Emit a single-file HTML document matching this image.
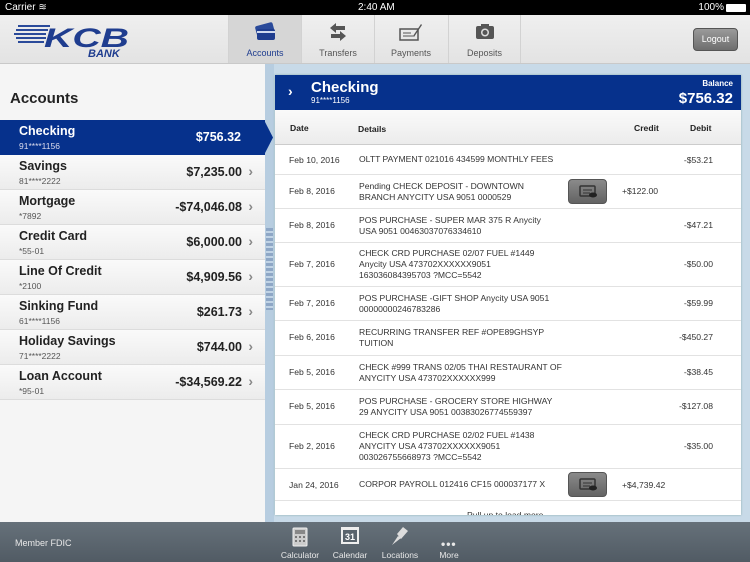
<!DOCTYPE html>
<html><head><meta charset="utf-8"><style>
*{margin:0;padding:0;box-sizing:border-box}
body{width:750px;height:562px;overflow:hidden;font-family:"Liberation Sans",Arial,sans-serif;background:#c8dae8;position:relative}
.a{position:absolute}
.status{left:0;top:0;width:750px;height:15px;background:#000;color:#fff;font-size:10px;line-height:15px}
.nav{left:0;top:15px;width:750px;height:49px;background:linear-gradient(#efefef,#e3e3e3);border-bottom:1px solid #c9c9c9}
.tab{top:0;height:48px;width:73px;border-left:1px solid #d2d2d2;text-align:center;font-size:9px;color:#555}
.tab .l{position:absolute;left:0;right:0;top:33px}
.left{left:0;top:64px;width:265px;height:458px;background:#f5f5f5}
.row{left:0;width:265px;height:35px;background:linear-gradient(#fafafa,#ececec);border-bottom:1px solid #dcdcdc}
.row .n{position:absolute;left:19px;top:4px;font-size:12.5px;font-weight:bold;color:#222}
.row .s{position:absolute;left:19px;top:21px;font-size:8.5px;color:#555}
.row .v{position:absolute;right:23px;top:10px;font-size:12.5px;font-weight:bold;color:#222}
.row .c{position:absolute;right:12px;top:8px;font-size:14px;color:#888;font-weight:bold}
.card{left:275px;top:75px;width:466px;height:440px;background:#fff;overflow:hidden;box-shadow:0 0 2px #8aa}
.tr{left:0;width:466px;border-bottom:1px solid #e2e2e2;font-size:8.6px;color:#333}
.tr .d{position:absolute;left:14px}
.tr .t{position:absolute;left:84px;line-height:11px}
.tr .cr{position:absolute;left:347px}
.tr .db{position:absolute;right:28px}
.btn{position:absolute;left:293px;width:39px;height:25px;border-radius:4px;background:linear-gradient(#8a8a8a,#636363);border:1px solid #555}
.bottom{left:0;top:522px;width:750px;height:40px;background:linear-gradient(#66717a,#515b64);color:#e8e8e8;font-size:8.5px}
.bi{top:28px;text-align:center;width:50px}
</style></head><body>
<div class="a status"><span style="position:absolute;left:5px">Carrier ≋</span><span style="position:absolute;left:358px">2:40 AM</span><span style="position:absolute;right:26px">100%</span><span style="position:absolute;right:4px;top:4px;width:20px;height:8px;background:#fff;border-radius:1px"></span></div>
<div class="a nav">
 <svg class="a" style="left:0;top:0" width="140" height="48" viewBox="0 0 140 48">
  <g fill="#2a4a9a"><rect x="18" y="10" width="32" height="2"/><rect x="16" y="14" width="32" height="2"/><rect x="14" y="18" width="32" height="2"/><rect x="16" y="22" width="30" height="2"/><rect x="18" y="26" width="26" height="2"/></g>
  <text x="44" y="32" font-family="Liberation Sans" font-weight="bold" font-style="italic" font-size="27" fill="#1f3d8f" textLength="85" lengthAdjust="spacingAndGlyphs">KCB</text>
  <text x="88" y="42" font-family="Liberation Sans" font-weight="bold" font-style="italic" font-size="11" fill="#1f3d8f">BANK</text>
 </svg>
 <div class="a tab" style="left:228px;background:#d6d6d6;color:#1f3d8f"><svg style="margin-top:7px" width="24" height="20" viewBox="0 0 24 20"><rect x="3" y="2" width="18" height="12" rx="2" fill="#2a4a9a" transform="rotate(-15 12 8)"/><rect x="4" y="7" width="18" height="11" rx="2" fill="#1f3d8f"/><rect x="4" y="9" width="18" height="2" fill="#cfd8ee"/></svg><div class="l">Accounts</div></div>
 <div class="a tab" style="left:301px"><svg style="margin-top:8px" width="20" height="18" viewBox="0 0 20 18"><path d="M2 5 L8 0 V3 H17 V7 H8 V10Z M18 13 L12 8 V11 H3 V15 H12 V18Z" fill="#555"/></svg><div class="l">Transfers</div></div>
 <div class="a tab" style="left:374px"><svg style="margin-top:7px" width="24" height="20" viewBox="0 0 24 20"><rect x="1" y="7" width="18" height="11" fill="none" stroke="#555" stroke-width="1.5"/><path d="M4 11h8M4 14h10" stroke="#555"/><path d="M14 14 L22 2 L23 3 L15 15Z" fill="#555"/></svg><div class="l">Payments</div></div>
 <div class="a tab" style="left:448px;border-right:1px solid #d2d2d2"><svg style="margin-top:8px" width="20" height="17" viewBox="0 0 20 17"><rect x="1" y="3" width="18" height="13" rx="2" fill="#555"/><rect x="6" y="1" width="8" height="3" fill="#555"/><circle cx="10" cy="9.5" r="4" fill="#ddd"/><circle cx="10" cy="9.5" r="2.5" fill="#555"/></svg><div class="l">Deposits</div></div>
 <div class="a" style="left:693px;top:13px;width:45px;height:23px;border-radius:4px;background:linear-gradient(#9a9a9a,#6e6e6e);border:1px solid #555;color:#fff;font-size:9px;text-align:center;line-height:21px">Logout</div>
</div>
<div class="a left">
 <div class="a" style="left:10px;top:26px;font-size:15px;font-weight:bold;color:#222">Accounts</div>
</div>
<div class="a" style="left:265px;top:64px;width:9px;height:458px;background:#b7cde0"></div>
<div class="a" style="left:266px;top:228px;width:7px;height:82px;background:repeating-linear-gradient(#8ea7c6 0 3px,#c1d4e6 3px 5px)"></div>
<div class="a row" style="top:120px;width:265px;background:#06318c;border:none"><div class="n" style="color:#fff">Checking</div><div class="s" style="color:#dde">91****1156</div><div class="v" style="color:#fff;right:24px">$756.32</div></div>
<svg class="a" style="left:264px;top:120px" width="10" height="35"><path d="M0 0L9 17.5L0 35Z" fill="#06318c"/></svg>
<div class="a row" style="top:155px"><div class="n">Savings</div><div class="s">81****2222</div><div class="v">$7,235.00</div><div class="c">›</div></div>
<div class="a row" style="top:190px"><div class="n">Mortgage</div><div class="s">*7892</div><div class="v">-$74,046.08</div><div class="c">›</div></div>
<div class="a row" style="top:225px"><div class="n">Credit Card</div><div class="s">*55-01</div><div class="v">$6,000.00</div><div class="c">›</div></div>
<div class="a row" style="top:260px"><div class="n">Line Of Credit</div><div class="s">*2100</div><div class="v">$4,909.56</div><div class="c">›</div></div>
<div class="a row" style="top:295px"><div class="n">Sinking Fund</div><div class="s">61****1156</div><div class="v">$261.73</div><div class="c">›</div></div>
<div class="a row" style="top:330px"><div class="n">Holiday Savings</div><div class="s">71****2222</div><div class="v">$744.00</div><div class="c">›</div></div>
<div class="a row" style="top:365px"><div class="n">Loan Account</div><div class="s">*95-01</div><div class="v">-$34,569.22</div><div class="c">›</div></div>

<div class="a card">
 <div class="a" style="left:0;top:0;width:466px;height:35px;background:#06318c;color:#fff">
  <div class="a" style="left:13px;top:8px;font-size:14px;font-weight:bold">›</div>
  <div class="a" style="left:36px;top:4px;font-size:15px;font-weight:bold">Checking</div>
  <div class="a" style="left:36px;top:21px;font-size:8px">91****1156</div>
  <div class="a" style="right:8px;top:4px;font-size:8px;font-weight:bold">Balance</div>
  <div class="a" style="right:8px;top:15px;font-size:15px;font-weight:bold">$756.32</div>
 </div>
 <div class="a" style="left:0;top:35px;width:466px;height:35px;background:linear-gradient(#fafafa,#ececec);border-bottom:1px solid #ccc;font-size:8.6px;font-weight:bold;color:#222">
  <span class="a" style="left:15px;top:13px">Date</span><span class="a" style="left:83px;top:14px">Details</span><span class="a" style="left:359px;top:13px">Credit</span><span class="a" style="left:415px;top:13px">Debit</span>
 </div>
 <div class="a tr" style="top:70px;height:30px"><span class="d" style="top:10px">Feb 10, 2016</span><span class="t" style="top:9px">OLTT PAYMENT 021016 434599 MONTHLY FEES</span><span class="db" style="top:10px">-$53.21</span></div>
 <div class="a tr" style="top:100px;height:34px"><span class="d" style="top:11px">Feb 8, 2016</span><span class="t" style="top:6px">Pending CHECK DEPOSIT - DOWNTOWN<br>BRANCH ANYCITY USA 9051 0000529</span><div class="btn" style="top:4px"><svg width="37" height="23"><rect x="11" y="6" width="15" height="10" rx="1" fill="none" stroke="#333" stroke-width="1.5"/><path d="M14 10h9M14 13h7" stroke="#333"/><ellipse cx="24" cy="15" rx="4" ry="2.5" fill="#222"/></svg></div><span class="cr" style="top:11px">+$122.00</span></div>
 <div class="a tr" style="top:134px;height:34px"><span class="d" style="top:11px">Feb 8, 2016</span><span class="t" style="top:6px">POS PURCHASE -  SUPER MAR 375 R Anycity<br>USA 9051 00463037076334610</span><span class="db" style="top:11px">-$47.21</span></div>
 <div class="a tr" style="top:168px;height:44px"><span class="d" style="top:16px">Feb 7, 2016</span><span class="t" style="top:5px">CHECK CRD PURCHASE 02/07  FUEL #1449<br>Anycity USA 473702XXXXXX9051<br>163036084395703 ?MCC=5542</span><span class="db" style="top:16px">-$50.00</span></div>
 <div class="a tr" style="top:212px;height:34px"><span class="d" style="top:11px">Feb 7, 2016</span><span class="t" style="top:6px">POS PURCHASE -GIFT SHOP Anycity USA 9051<br>00000000246783286</span><span class="db" style="top:11px">-$59.99</span></div>
 <div class="a tr" style="top:246px;height:35px"><span class="d" style="top:11px">Feb 6, 2016</span><span class="t" style="top:6px">RECURRING TRANSFER REF #OPE89GHSYP<br>TUITION</span><span class="db" style="top:11px">-$450.27</span></div>
 <div class="a tr" style="top:281px;height:34px"><span class="d" style="top:11px">Feb 5, 2016</span><span class="t" style="top:6px">CHECK #999 TRANS 02/05 THAI RESTAURANT OF<br>ANYCITY USA 473702XXXXXX999</span><span class="db" style="top:11px">-$38.45</span></div>
 <div class="a tr" style="top:315px;height:35px"><span class="d" style="top:11px">Feb 5, 2016</span><span class="t" style="top:6px">POS PURCHASE - GROCERY STORE HIGHWAY<br>29 ANYCITY USA 9051 00383026774559397</span><span class="db" style="top:11px">-$127.08</span></div>
 <div class="a tr" style="top:350px;height:44px"><span class="d" style="top:16px">Feb 2, 2016</span><span class="t" style="top:5px">CHECK CRD PURCHASE 02/02 FUEL #1438<br>ANYCITY USA 473702XXXXXX9051<br>003026755668973 ?MCC=5542</span><span class="db" style="top:16px">-$35.00</span></div>
 <div class="a tr" style="top:394px;height:32px"><span class="d" style="top:11px">Jan 24, 2016</span><span class="t" style="top:10px">CORPOR PAYROLL 012416 CF15 000037177 X</span><div class="btn" style="top:3px"><svg width="37" height="23"><rect x="11" y="6" width="15" height="10" rx="1" fill="none" stroke="#333" stroke-width="1.5"/><path d="M14 10h9M14 13h7" stroke="#333"/><ellipse cx="24" cy="15" rx="4" ry="2.5" fill="#222"/></svg></div><span class="cr" style="top:11px">+$4,739.42</span></div>
 <div class="a" style="left:192px;top:435px;font-size:8.6px;color:#333">Pull up to load more</div>
</div>

<div class="a bottom">
 <div class="a" style="left:15px;top:16px;font-size:9px">Member FDIC</div>
 <div class="a bi" style="left:275px"><svg class="a" style="left:17px;top:-23px" width="16" height="20"><rect x="1" y="1" width="14" height="18" rx="1" fill="#ccc" stroke="#eee"/><rect x="3" y="3" width="10" height="4" fill="#888"/><g fill="#777"><rect x="3" y="9" width="2" height="2"/><rect x="7" y="9" width="2" height="2"/><rect x="11" y="9" width="2" height="2"/><rect x="3" y="13" width="2" height="2"/><rect x="7" y="13" width="2" height="2"/><rect x="11" y="13" width="2" height="2"/></g></svg>Calculator</div>
 <div class="a bi" style="left:325px"><svg class="a" style="left:15px;top:-25px" width="20" height="20"><rect x="1" y="2" width="18" height="17" fill="#eee"/><rect x="3" y="5" width="14" height="12" fill="#59636c"/><text x="10" y="15" font-size="9" font-weight="bold" fill="#fff" text-anchor="middle" font-family="Liberation Sans">31</text></svg>Calendar</div>
 <div class="a bi" style="left:375px"><svg class="a" style="left:14px;top:-25px" width="20" height="22"><path d="M3 20 L9 11 L12 13Z M8 9 L14 2 L19 6 L12 14Z" fill="#ddd"/></svg>Locations</div>
 <div class="a bi" style="left:424px"><div class="a" style="left:17px;top:-13px;font-size:12px;font-weight:bold;letter-spacing:1px">•••</div>More</div>
</div>
</body></html>
